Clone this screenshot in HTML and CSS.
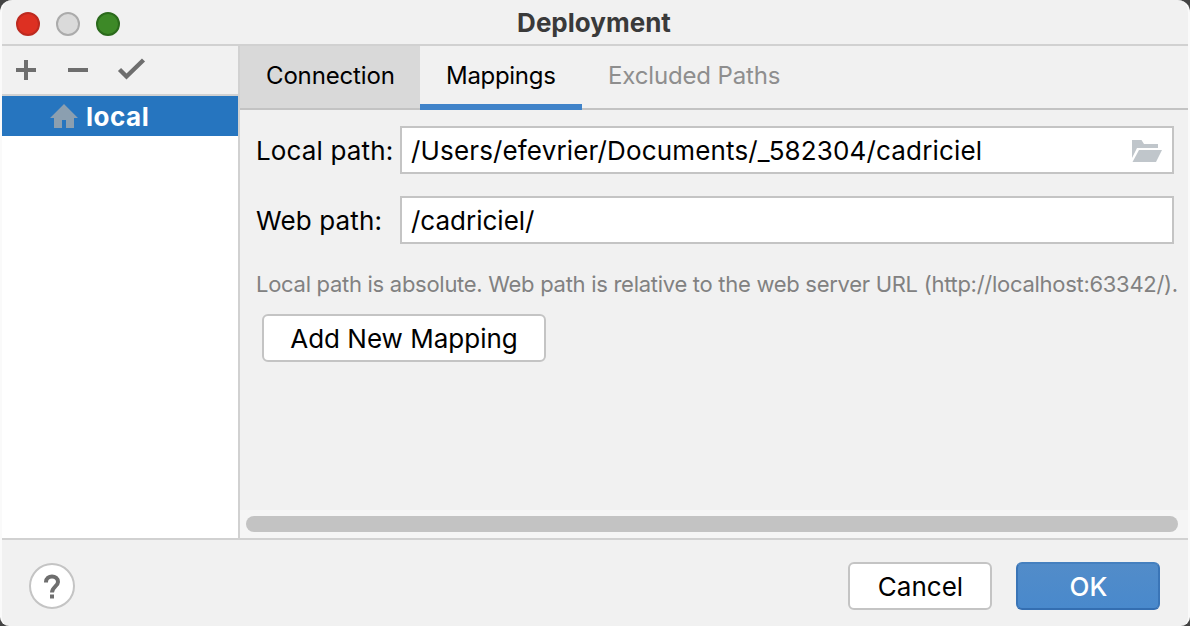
FILE: index.html
```html
<!DOCTYPE html>
<html lang="en">
<head>
<meta charset="utf-8">
<title>Deployment</title>
<link rel="stylesheet" href="styles.css">
</head>
<body>
<div class="window">
  <header class="titlebar">
    <div class="lights"><span class="light red"></span><span class="light gray"></span><span class="light green"></span></div>
    <h1 class="title"><span>Deployment</span></h1>
  </header>
  <main class="main">
    <aside class="sidebar">
      <div class="toolbar">
        <svg width="236" height="48" viewBox="2 46 236 48" fill="#6e6e6e"><path d="M16 68h8v-8h4v8h8v4h-8v8h-4v-8h-8zM68 68h20v4H68z"/><path d="M119.5 69.5l7 7L143.500 60" fill="none" stroke="#6e6e6e" stroke-width="4.4"/></svg>
      </div>
      <div class="server">
        <svg width="28" height="24" viewBox="0 0 28 24"><path d="M14 0L28 14H24V24H16V16H12V24H4V14H0z" fill="#8b9fb0"/></svg>
        <span class="server-name">local</span>
      </div>
    </aside>
    <section class="content">
      <nav class="tabs">
        <div class="tab connection"><span>Connection</span></div>
        <div class="tab mappings"><span>Mappings</span></div>
        <div class="tab excluded"><span>Excluded Paths</span></div>
      </nav>
      <div class="form">
        <div class="row"><label class="label local-label">Local path:</label><div class="field"><span class="local-value">/Users/efevrier/Documents/_582304/cadriciel</span>
          <svg width="30" height="22" viewBox="0 0 30 22" fill="#c0c6cb"><path d="M0 0H9.500L12 4H26V8H5L0 18z"/><path d="M7 10H30L24 22H0.500z"/></svg></div></div>
        <div class="row"><label class="label web-label">Web path:</label><div class="field"><span class="web-value">/cadriciel/</span></div></div>
        <p class="hint"><span>Local path is absolute. Web path is relative to the web server URL (http://localhost:63342/).</span></p>
        <div class="button add"><span>Add New Mapping</span></div>
      </div>
      <div class="scrollbar"><div class="thumb"></div></div>
    </section>
  </main>
  <footer class="footer">
    <div class="help"><svg width="18" height="26" viewBox="0 0 18 26"><path d="M3 9.500V9C3 1.500 15 1.500 15 9C15 13 9 14 9 19.500" fill="none" stroke="#6e6e6e" stroke-width="4"/><path d="M7 21.500h4v4H7z" fill="#6e6e6e"/></svg></div>
    <div class="button cancel"><span>Cancel</span></div>
    <div class="button ok"><span>OK</span></div>
  </footer>
</div>
</body>
</html>
```
FILE: styles.css
```css
* { box-sizing: border-box; }
body { margin: 0; background: #444; width: 1190px; height: 626px; overflow: hidden; font: 26px/30px Inter, "Liberation Sans", sans-serif; color: #000; white-space: nowrap; }
.window { width: 1190px; height: 626px; display: flex; flex-direction: column; background: #f1f1f1; border: solid #fafafa; border-width: 0 2px; border-radius: 12px 12px 9px 9px; overflow: hidden; }
.titlebar { height: 46px; border-bottom: 2px solid #d1d1d1; display: grid; grid-template-columns: 200px 1fr 200px; align-items: center; }
.lights { display: flex; gap: 16px; padding: 4px 0 0 14px; }
.light { width: 24px; height: 24px; border-radius: 50%; border: 2px solid; }
.red { background: #dd3022; border-color: #bd2a20; }
.gray { background: #dadada; border-color: #ababab; }
.green { background: #3d8927; border-color: #2b6a1c; }
.title { margin: 2px 0 0; padding-right: 2px; font-size: 26px; line-height: 30px; font-weight: 700; color: #3a3a3a; text-align: center; }
.main { display: flex; height: 494px; border-bottom: 2px solid #d1d1d1; }
.sidebar { width: 238px; flex: none; background: #fff; border-right: 2px solid #d1d1d1; }
.toolbar { height: 50px; background: #f1f1f1; border-bottom: 2px solid #d1d1d1; }
.toolbar svg { display: block; }
.server { height: 40px; background: #2675bf; display: flex; align-items: center; gap: 8px; padding-left: 48px; }
.server-name { padding-top: 1px; color: #fff; font-weight: 700; letter-spacing: 0.5px; }
.content { flex: 1; min-width: 0; display: flex; flex-direction: column; }
.tabs { height: 64px; display: flex; border-bottom: 2px solid #c3c3c3; }
.tab { height: 62px; padding: 15px 0 0 26px; font-size: 24px; letter-spacing: -0.15px; }
.connection { width: 180px; background: #d9d9d9; }
.mappings { width: 162px; height: 64px; border-bottom: 6px solid #4083c9; letter-spacing: -0.3px; }
.excluded { color: #8e8e8e; }
.form { flex: 1; padding: 16px 14px 0 16px; }
.row { display: flex; align-items: center; height: 48px; margin-bottom: 22px; }
.label { width: 144px; flex: none; padding-top: 1px; letter-spacing: 0.15px; }
.field { flex: 1; min-width: 0; height: 48px; border: 2px solid #c4c4c4; background: #fff; padding: 1px 10px 0 9px; display: flex; align-items: center; justify-content: space-between; }
.local-value { letter-spacing: 0.15px; }
.hint { margin: 0; height: 48px; padding-top: 3px; font-size: 22px; color: #818181; letter-spacing: -0.285px; }
.button { height: 48px; display: flex; align-items: center; justify-content: center; padding-top: 1px; background: #fff; border: 2px solid #c4c4c4; border-radius: 6px; }
.add { width: 284px; margin-left: 6px; }
.scrollbar { height: 28px; background: #f5f5f5; padding: 6px 10px 0 6px; }
.thumb { height: 16px; border-radius: 8px; background: #c3c3c3; }
.footer { flex: 1; display: flex; padding: 22px 28px 0 27px; }
.help { width: 46px; height: 46px; margin: 1px auto 0 0; border: 2px solid #c4c4c4; border-radius: 50%; background: #fff; display: flex; align-items: center; justify-content: center; }
.cancel, .ok { width: 144px; padding-left: 1px; }
.cancel { margin-right: 24px; }
.ok { color: #fff; font-weight: 500; background: linear-gradient(#528cc9, #4989cc); border-color: #4580bf #3a75b7 #346eb1; }
```
